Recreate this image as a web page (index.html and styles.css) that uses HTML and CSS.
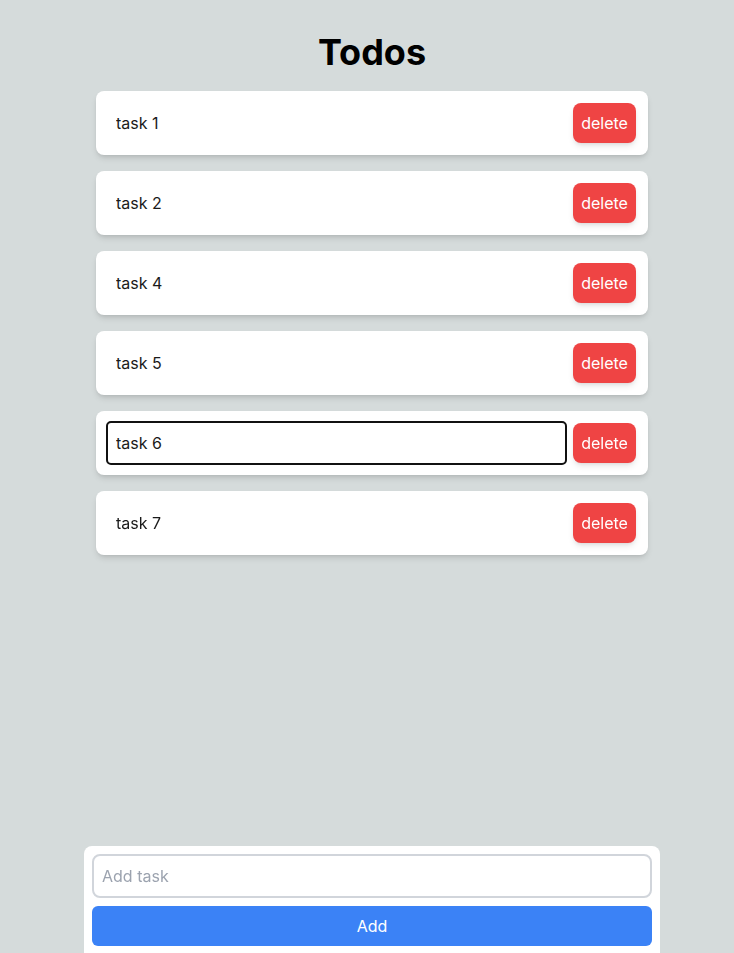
FILE: index.html
```html
<!DOCTYPE html>
<html>
<head>
<meta charset="utf-8">
<link rel="stylesheet" href="styles.css">
</head>
<body>
<div class="page">
  <h1 class="title">Todos</h1>
  <ul class="list">
    <li class="card"><input class="task" value="task 1" readonly><button class="del">delete</button></li>
    <li class="card"><input class="task" value="task 2" readonly><button class="del">delete</button></li>
    <li class="card"><input class="task" value="task 4" readonly><button class="del">delete</button></li>
    <li class="card"><input class="task" value="task 5" readonly><button class="del">delete</button></li>
    <li class="card"><input class="task editing" value="task 6" autofocus><button class="del">delete</button></li>
    <li class="card"><input class="task" value="task 7" readonly><button class="del">delete</button></li>
  </ul>
  <form class="adder">
    <input class="add-input" placeholder="Add task">
    <button class="add-btn" type="button">Add</button>
  </form>
</div>
</body>
</html>
```
FILE: styles.css
```css
* { box-sizing: border-box; }
html, body { margin: 0; padding: 0; }
body {
  background: #d5dbdb;
  font-family: Inter, "Noto Sans", sans-serif;
  color: #111;
}
.page {
  min-height: 953px;
  display: flex;
  flex-direction: column;
  align-items: center;
  padding-left: 10px;
  padding-top: 32px;
}
.title {
  margin: 0 0 19px;
  font-size: 36px;
  line-height: 40px;
  font-weight: 700;
  color: #000;
}
.list {
  list-style: none;
  margin: 0;
  padding: 0;
  width: 552px;
  display: flex;
  flex-direction: column;
  gap: 16px;
}
.card {
  background: #fff;
  border-radius: 8px;
  padding: 12px;
  display: flex;
  gap: 8px;
  align-items: center;
  box-shadow: 0 4px 6px -1px rgba(0,0,0,0.12), 0 2px 4px -2px rgba(0,0,0,0.1);
}
.task {
  flex: 1;
  height: 40px;
  border: 1px solid transparent;
  border-radius: 4px;
  padding: 0 7px;
  font: 16px Inter, sans-serif;
  color: #1a1a1a;
  background: #fff;
  outline: none;
  caret-color: #000;
}
.task.editing {
  outline: 2px solid #111;
  outline-offset: 0;
  border-radius: 3px;
}
.del {
  width: 63px;
  height: 40px;
  border: none;
  border-radius: 8px;
  background: #ef4444;
  color: #fff;
  font: 16px Inter, sans-serif;
  padding: 0;
  box-shadow: 0 4px 6px -1px rgba(0,0,0,0.1), 0 2px 4px -2px rgba(0,0,0,0.1);
}
.adder {
  margin-top: auto;
  width: 576px;
  background: #fff;
  border-radius: 8px 8px 0 0;
  padding: 8px 8px 7px;
  display: flex;
  flex-direction: column;
  gap: 8px;
}
.add-input {
  height: 44px;
  border: 2px solid #d1d5db;
  border-radius: 8px;
  padding: 0 8px;
  font: 16px Inter, sans-serif;
  outline: none;
}
.add-input::placeholder { color: #9ca3af; }
.add-btn {
  height: 40px;
  border: none;
  border-radius: 6px;
  background: #3b82f6;
  color: #fff;
  font: 16px Inter, sans-serif;
}
```
